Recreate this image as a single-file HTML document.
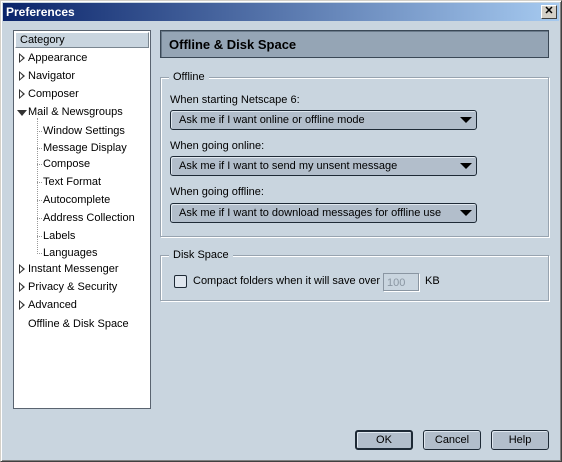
<!DOCTYPE html>
<html><head><style>
*{margin:0;padding:0;box-sizing:border-box}
body{width:562px;height:462px;overflow:hidden;background:#c9d5df;font-family:"Liberation Sans",sans-serif;font-size:11px;color:#000;position:relative}
.a{position:absolute;white-space:nowrap}
#win{position:absolute;left:0;top:0;width:562px;height:462px;border:1px solid #d4d0c8;border-right-color:#404040;border-bottom-color:#404040;box-shadow:inset 1px 1px 0 #fff,inset -1px -1px 0 #808080}
#title{position:absolute;left:3px;top:3px;width:556px;height:18px;background:linear-gradient(90deg,#0a246a,#a6caf0);color:#fff;font-weight:bold;font-size:12px;padding:2px 0 0 3px}
#close{position:absolute;left:541px;top:5px;width:16px;height:14px;background:#d4d0c8;border:1px solid;border-color:#fff #404040 #404040 #fff;font-size:11px;font-weight:bold;text-align:center;line-height:11px;color:#000}
#tree{position:absolute;left:13px;top:30px;width:138px;height:379px;background:#fff;border:1px solid #5a6470}
#cat{position:absolute;left:1px;top:1px;width:134px;height:16px;background:#c9d5df;border:1px solid;border-color:#fff #7a8690 #7a8690 #fff;padding:1px 0 0 4px;font-size:11px}
.t{position:absolute;font-size:11px;white-space:nowrap}
.tri{position:absolute;width:0;height:0;border-top:5px solid transparent;border-bottom:5px solid transparent;border-left:6px solid #333}
.tri:after{content:"";position:absolute;left:-5px;top:-3px;border-top:3px solid transparent;border-bottom:3px solid transparent;border-left:3px solid #fff}
#hdr{position:absolute;left:160px;top:30px;width:389px;height:28px;background:#95a5b5;border:1px solid #3a4856;font-weight:bold;font-size:13px;padding:6px 0 0 8px;box-shadow:inset 1px 1px 0 #6a7a8a}
.grp{position:absolute;border:1px solid #98a4b0;box-shadow:1px 1px 0 #fff inset,1px 1px 0 #fff}
.leg{position:absolute;background:#c9d5df;padding:0 4px}
.dd{position:absolute;width:307px;height:20px;background:#b2becb;border:1px solid #1e2a36;border-radius:3px;padding:3px 0 0 8px;box-shadow:inset 1px 1px 0 #e0e8f0}
.dd i{position:absolute;right:0;top:0;width:20px;height:18px}
.dd i:after{content:"";position:absolute;left:4px;top:6px;border-left:6px solid transparent;border-right:6px solid transparent;border-top:6px solid #000}
.btn{position:absolute;height:20px;width:58px;background:#b2becb;border:1px solid #1e2a36;border-radius:3px;text-align:center;padding-top:3px;box-shadow:inset 1px 1px 0 #e0e8f0}
</style></head><body>
<div id="win"></div>
<div id="title">Preferences</div>
<div id="close">✕</div>
<div id="tree">
<div id="cat">Category</div>
<div class="tri" style="left:5px;top:22px"></div><div class="t" style="left:14px;top:21px">Appearance</div>
<div class="tri" style="left:5px;top:40px"></div><div class="t" style="left:14px;top:39px">Navigator</div>
<div class="tri" style="left:5px;top:58px"></div><div class="t" style="left:14px;top:57px">Composer</div>
<div class="a" style="left:3px;top:79px;border-left:5px solid transparent;border-right:5px solid transparent;border-top:6px solid #333"></div>
<div class="t" style="left:14px;top:75px">Mail &amp; Newsgroups</div>
<div class="a" style="left:23px;top:87px;height:136px;border-left:1px dotted #999"></div>
<div class="t" style="left:23px;top:94px;border-top:1px dotted #999;width:5px;margin-top:6px"></div><div class="t" style="left:29px;top:94px">Window Settings</div>
<div class="t" style="left:23px;top:111px;border-top:1px dotted #999;width:5px;margin-top:6px"></div><div class="t" style="left:29px;top:111px">Message Display</div>
<div class="t" style="left:23px;top:127px;border-top:1px dotted #999;width:5px;margin-top:6px"></div><div class="t" style="left:29px;top:127px">Compose</div>
<div class="t" style="left:23px;top:145px;border-top:1px dotted #999;width:5px;margin-top:6px"></div><div class="t" style="left:29px;top:145px">Text Format</div>
<div class="t" style="left:23px;top:163px;border-top:1px dotted #999;width:5px;margin-top:6px"></div><div class="t" style="left:29px;top:163px">Autocomplete</div>
<div class="t" style="left:23px;top:181px;border-top:1px dotted #999;width:5px;margin-top:6px"></div><div class="t" style="left:29px;top:181px">Address Collection</div>
<div class="t" style="left:23px;top:199px;border-top:1px dotted #999;width:5px;margin-top:6px"></div><div class="t" style="left:29px;top:199px">Labels</div>
<div class="t" style="left:23px;top:216px;border-top:1px dotted #999;width:5px;margin-top:6px"></div><div class="t" style="left:29px;top:216px">Languages</div>
<div class="tri" style="left:5px;top:233px"></div><div class="t" style="left:14px;top:232px">Instant Messenger</div>
<div class="tri" style="left:5px;top:251px"></div><div class="t" style="left:14px;top:250px">Privacy &amp; Security</div>
<div class="tri" style="left:5px;top:269px"></div><div class="t" style="left:14px;top:268px">Advanced</div>
<div class="t" style="left:14px;top:287px">Offline &amp; Disk Space</div>
</div>
<div id="hdr">Offline &amp; Disk Space</div>
<div class="grp" style="left:160px;top:77px;width:389px;height:160px"></div>
<div class="leg a" style="left:169px;top:71px">Offline</div>
<div class="a" style="left:170px;top:94px">When starting Netscape 6:</div>
<div class="dd" style="left:170px;top:110px">Ask me if I want online or offline mode<i></i></div>
<div class="a" style="left:170px;top:140px">When going online:</div>
<div class="dd" style="left:170px;top:156px">Ask me if I want to send my unsent message<i></i></div>
<div class="a" style="left:170px;top:186px">When going offline:</div>
<div class="dd" style="left:170px;top:203px">Ask me if I want to download messages for offline use<i></i></div>
<div class="grp" style="left:160px;top:255px;width:389px;height:46px"></div>
<div class="leg a" style="left:169px;top:249px">Disk Space</div>
<div class="a" style="left:174px;top:275px;width:13px;height:13px;border:1px solid #1e2a36;background:#dfe6ee;border-radius:2px"></div>
<div class="a" style="left:193px;top:275px">Compact folders when it will save over</div>
<div class="a" style="left:383px;top:273px;width:36px;height:18px;border:1px solid #8a96a2;background:#c9d5df;box-shadow:1px 1px 0 #fff;color:#8a96a2;padding:3px 0 0 3px">100</div>
<div class="a" style="left:425px;top:275px">KB</div>
<div class="btn" style="left:355px;top:430px;border-width:2px;padding-top:2px">OK</div>
<div class="btn" style="left:423px;top:430px">Cancel</div>
<div class="btn" style="left:491px;top:430px">Help</div>
</body></html>
